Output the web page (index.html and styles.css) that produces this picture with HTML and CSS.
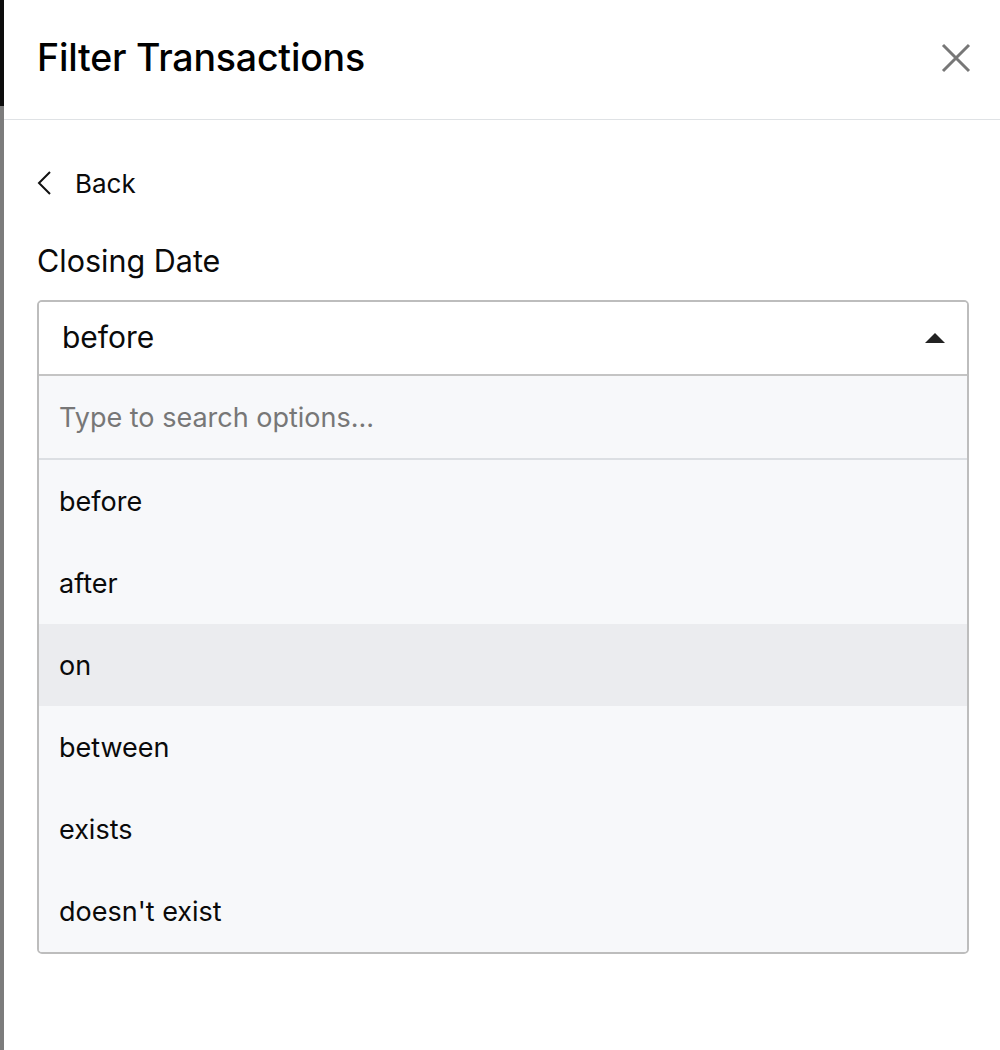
FILE: index.html
```html
<!DOCTYPE html>
<html>
<head>
<meta charset="utf-8">
<link rel="stylesheet" href="styles.css">
</head>
<body>
<div class="page">
  <div class="backdrop">
    <div class="backdrop-top"></div>
    <div class="backdrop-bottom"></div>
  </div>
  <div class="drawer">
    <header class="header">
      <h1 class="title">Filter Transactions</h1>
      <button class="close" aria-label="Close">
        <svg width="32" height="32" viewBox="0 0 32 32"><path d="M3 3 L29 29 M29 3 L3 29" stroke="#777" stroke-width="3" fill="none"/></svg>
      </button>
    </header>
    <div class="body">
      <div class="back">
        <svg class="chev" width="16" height="24" viewBox="0 0 16 24"><path d="M13 1 L2 12 L13 23" stroke="#111" stroke-width="2" fill="none"/></svg>
        <span>Back</span>
      </div>
      <div class="label">Closing Date</div>
      <div class="select">
        <div class="control">
          <span class="value">before</span>
          <span class="caret"></span>
        </div>
        <div class="menu">
          <div class="search">Type to search options...</div>
          <div class="option">before</div>
          <div class="option">after</div>
          <div class="option active">on</div>
          <div class="option">between</div>
          <div class="option">exists</div>
          <div class="option">doesn't exist</div>
        </div>
      </div>
    </div>
  </div>
</div>
</body>
</html>
```
FILE: styles.css
```css
* { box-sizing: border-box; }
html, body { margin: 0; padding: 0; background: #fff; }
body { font-family: Inter, "Noto Sans", sans-serif; color: #0a0a0a; }
.page { display: flex; width: 1000px; height: 1050px; }
.backdrop { width: 4px; display: flex; flex-direction: column; }
.backdrop-top { height: 106px; background: #0d0d0d; }
.backdrop-bottom { flex: 1; background: #7c7c7c; }
.drawer { flex: 1; display: flex; flex-direction: column; background: #fff; }
.header { height: 120px; border-bottom: 1px solid #dfe2e5; display: flex; align-items: center; justify-content: space-between; padding: 0 28px 0 33px; }
.title { margin: 0 0 5px 0; font-size: 37.5px; font-weight: 500; letter-spacing: -0.2px; color: #000; }
.close { background: none; border: 0; padding: 0; width: 32px; height: 32px; margin-bottom: 4px; }
.body { padding: 0 31px 0 33px; }
.back { display: flex; align-items: center; height: 30px; margin-top: 48px; font-size: 26px; }
.chev { margin-right: 22px; }
.label { margin-top: 46px; font-size: 30.5px; line-height: 34px; }
.select { margin-top: 22px; border: 2px solid #bdbdbd; border-radius: 5px; overflow: hidden; }
.control { height: 74px; display: flex; align-items: center; justify-content: space-between; padding: 0 22px 0 23px; background: #fff; border-bottom: 2px solid #c4c4c4; }
.value { font-size: 30px; margin-top: -2px; }
.caret { width: 0; height: 0; border-left: 10px solid transparent; border-right: 10px solid transparent; border-bottom: 10px solid #222; }
.menu { background: #f7f8fa; }
.search { height: 84px; display: flex; align-items: center; padding-left: 20px; font-size: 27px; color: #777; border-bottom: 2px solid #dcdfe3; }
.option { height: 82px; display: flex; align-items: center; padding-left: 20px; font-size: 27px; color: #0a0a0a; }
.option.active { background: #ebecef; }
```
